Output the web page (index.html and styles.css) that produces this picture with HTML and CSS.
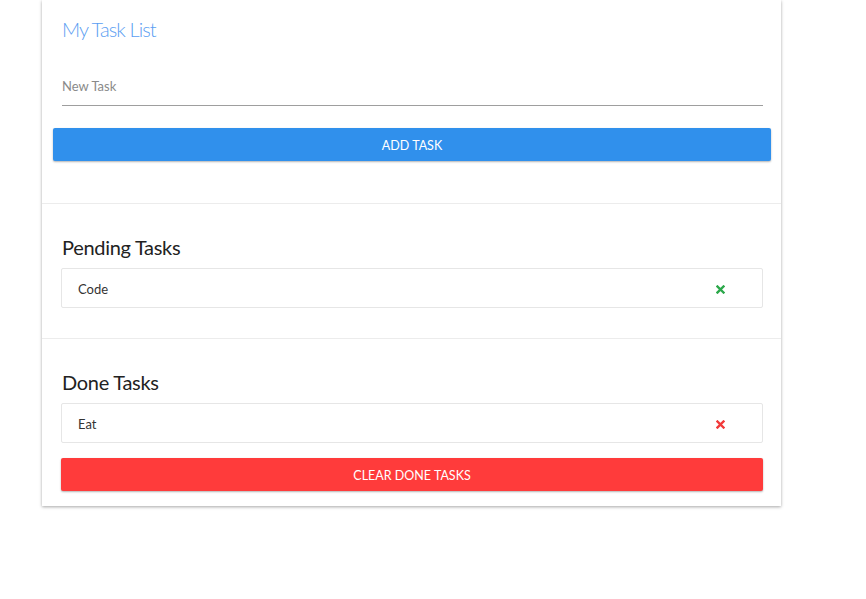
FILE: index.html
```html
<!DOCTYPE html>
<html>
<head>
<meta charset="utf-8">
<link rel="stylesheet" href="styles.css">
</head>
<body>
<div class="card">
  <section class="section add">
    <h1 class="title">My Task List</h1>
    <input class="task-input" type="text" placeholder="New Task">
    <button class="btn btn-blue">ADD TASK</button>
  </section>
  <section class="section pending">
    <h2 class="heading">Pending Tasks</h2>
    <div class="item">
      <span>Code</span>
      <svg class="x x-green" width="9" height="9" viewBox="0 0 9 9"><path d="M1.5 1.5L7.5 7.5M7.5 1.5L1.5 7.5" stroke="currentColor" stroke-width="2.4" stroke-linecap="square"/></svg>
    </div>
  </section>
  <section class="section done">
    <h2 class="heading">Done Tasks</h2>
    <div class="item">
      <span>Eat</span>
      <svg class="x x-red" width="9" height="9" viewBox="0 0 9 9"><path d="M1.5 1.5L7.5 7.5M7.5 1.5L1.5 7.5" stroke="currentColor" stroke-width="2.4" stroke-linecap="square"/></svg>
    </div>
    <button class="btn btn-red btn-clear">CLEAR DONE TASKS</button>
  </section>
</div>
</body>
</html>
```
FILE: styles.css
```css
* { box-sizing: border-box; }
html, body { margin: 0; padding: 0; background: #fff; }
body {
  font-family: Lato, "Open Sans", "Liberation Sans", sans-serif;
  width: 866px;
  height: 599px;
  overflow: hidden;
}
.card {
  margin-left: 42px;
  width: 739px;
  background: #fff;
  box-shadow: 0 1px 3px rgba(0,0,0,0.35);
}
.section {
  padding: 0 18px 0 19px;
  border-bottom: 1px solid #ececec;
}
.section:last-child { border-bottom: none; }
.add { padding-top: 14px; padding-bottom: 42px; }
.title {
  margin: 0 0 0 1px;
  font-size: 20px;
  line-height: 30px;
  font-weight: 300;
  letter-spacing: -0.9px;
  color: #5b9ef2;
}
.task-input {
  display: block;
  margin: 22px 0 0 1px;
  width: 701px;
  height: 40px;
  border: none;
  border-bottom: 1px solid #9e9e9e;
  padding: 0;
  font-family: inherit;
  font-size: 13px;
  color: #333;
  outline: none;
}
.task-input::placeholder { color: #8a8a8a; }
.btn {
  display: block;
  border: none;
  border-radius: 2px;
  color: #fff;
  font-family: inherit;
  font-size: 12.5px;
  height: 33px;
  padding: 2px 0 0 0;
  box-shadow: 0 1px 2px rgba(0,0,0,0.3);
}
.btn-blue {
  background: #3090ec;
  margin: 22px -8px 0 -8px;
  width: 718px;
}
.btn-red {
  background: #ff3b3b;
  width: 702px;
}
.pending { padding-top: 28px; padding-bottom: 30px; }
.done { padding-top: 28px; padding-bottom: 15px; }
.heading {
  margin: 0 0 6px 1px;
  font-size: 20px;
  line-height: 30px;
  font-weight: 400;
  letter-spacing: -0.3px;
  color: #222;
}
.item {
  display: flex;
  align-items: center;
  justify-content: space-between;
  height: 40px;
  border: 1px solid #e6e6e6;
  border-radius: 2px;
  padding: 2px 37px 0 16px;
  font-size: 13px;
  color: #333;
}
.x-green { color: #2ba84a; }
.x-red { color: #f23a3a; }
.btn-clear { margin-top: 15px; }
```
